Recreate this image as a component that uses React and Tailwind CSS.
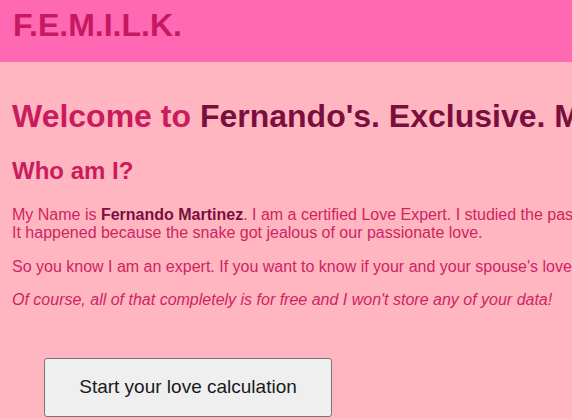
import React from 'react';

const App = () => {
  return (
    <div className="min-h-[419px] w-full overflow-hidden bg-[#ffb6c1] font-['Liberation_Sans',Arial,sans-serif]">
      <div className="w-[1500px]">
        <header className="h-[62px] bg-[#ff69b4] px-[13px] pt-[7px]">
          <h1 className="text-[32px] font-bold leading-[37px] text-[#c8185f]">F.E.M.I.L.K.</h1>
        </header>

        <main className="px-[12px]">
          <h1 className="mt-[36px] text-[32px] font-bold leading-[37px] text-[#cc1a5e]">
            Welcome to <span className="text-[#7a0f3d]">Fernando's. Exclusive. Mind-blowing. Love Calculator.</span>
          </h1>

          <h2 className="mt-[22px] text-[24px] font-bold leading-[28px] text-[#cc1a5e]">Who am I?</h2>

          <div className="mt-[21px] text-[16px] leading-[18px] text-[#d02362]">
            <p>
              My Name is <b className="text-[#7a0f3d]">Fernando Martinez</b>. I am a certified Love Expert. I studied the passion of Adam and Eve and why they got kicked out of paradise.
              <br />
              It happened because the snake got jealous of our passionate love.
            </p>
            <p className="mt-[16px]">
              So you know I am an expert. If you want to know if your and your spouse's love is true, just use my exclusive love calculator.
            </p>
            <p className="mt-[15px] italic">
              Of course, all of that completely is for free and I won't store any of your data!
            </p>
          </div>

          <button
            type="button"
            className="ml-[32px] mt-[49px] h-[59px] w-[288px] rounded-[3px] border border-[#767676] bg-[#efefef] text-[19px] text-[#1a1a1a]"
          >
            Start your love calculation
          </button>
        </main>
      </div>
    </div>
  );
};

export default App;
